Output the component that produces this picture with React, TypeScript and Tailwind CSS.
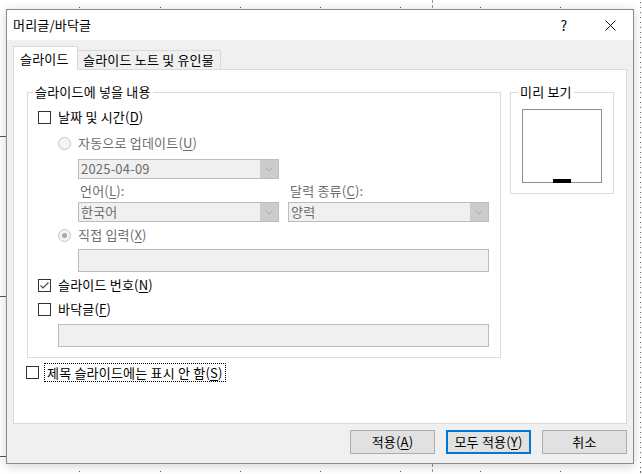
import React from "react";

// mnemonic letter, underlined like the Windows accelerator hint
const Mn = ({ k }: { k: string }) => (
  <span>
    (<u className="underline underline-offset-[2px] decoration-1">{k}</u>)
  </span>
);

function Check({ checked = false }: { checked?: boolean }) {
  return (
    <span className="relative inline-flex w-[13px] h-[13px] shrink-0 border border-[#333333] bg-white">
      {checked && (
        <svg className="absolute inset-0" width="11" height="11" viewBox="0 0 11 11">
          <path d="M1.5 5.5 L4 8 L9.5 2.5" fill="none" stroke="#444444" strokeWidth="1.1" />
        </svg>
      )}
    </span>
  );
}

function Radio({ checked = false }: { checked?: boolean }) {
  return (
    <span className="inline-flex items-center justify-center w-[13px] h-[13px] shrink-0 rounded-full border border-[#c4c4c4] bg-[#f4f4f4]">
      {checked && <span className="w-[5px] h-[5px] rounded-full bg-[#a8a8a8]" />}
    </span>
  );
}

function Combo({ value, w }: { value: string; w: string }) {
  return (
    <div className={`flex h-[20px] ${w} border border-[#bcbcbc] bg-[#f0f0f0]`}>
      <div className="flex-1 pl-[2px] flex items-center text-[#6d6d6d]">{value}</div>
      <div className="w-[18px] bg-[#cccccc] flex items-center justify-center">
        <svg width="8" height="5" viewBox="0 0 8 5">
          <path d="M0.5 0.5 L4 4 L7.5 0.5" fill="none" stroke="#a9a9a9" strokeWidth="1" />
        </svg>
      </div>
    </div>
  );
}

function Canvas() {
  const cols = [79, 160, 240, 320, 400, 480, 560, 640];
  const right = Array.from({ length: 95 }, (_, i) => i * 5 + 2);
  return (
    <svg className="absolute inset-0 pointer-events-none" width="642" height="474">
      {cols.map((x) => (
        <rect key={"t" + x} x={x} y={7} width={1} height={1} fill="#555" />
      ))}
      {cols.map((x) => (
        <rect key={"b" + x} x={x} y={471} width={1} height={1} fill="#555" />
      ))}
      {right.map((y) => (
        <rect key={"r" + y} x={640} y={y} width={1} height={1} fill="#666" />
      ))}
      <path d="M432.5 0 V10 M432.5 464 V474" stroke="#999" strokeDasharray="3 2" />
      <rect x={0} y={136} width={6} height={1} fill="#555" />
      <rect x={0} y={296} width={6} height={1} fill="#555" />
      <rect x={0} y={456} width={6} height={1} fill="#555" />
    </svg>
  );
}

export default function App() {
  return (
    <div className="relative w-[642px] h-[474px] bg-white overflow-hidden pl-[6px] pt-[9px] font-['Noto_Sans_CJK_KR','Noto_Sans',sans-serif] text-[13px] tracking-[0.2px] leading-[16px] text-black">
      <Canvas />

      {/* dialog window */}
      <div className="relative z-10 w-[628px] h-[455px] flex flex-col border border-[#8a8a8a] bg-[#f0f0f0] shadow-[0_2px_10px_rgba(0,0,0,0.18)]">
        {/* title bar */}
        <div className="h-[30px] flex items-center bg-white">
          <div className="pl-[6px]">머리글/바닥글</div>
          <div className="ml-auto flex h-full">
            <div className="w-[46px] flex items-center justify-center text-[14px]">?</div>
            <div className="w-[46px] flex items-center justify-center">
              <svg width="11" height="11" viewBox="0 0 11 11">
                <path d="M0.5 0.5 L10.5 10.5 M10.5 0.5 L0.5 10.5" stroke="#111" strokeWidth="1" />
              </svg>
            </div>
          </div>
        </div>

        {/* body */}
        <div className="flex-1 flex flex-col px-[6px] pt-[6px]">
          {/* tabs */}
          <div className="flex items-end h-[23px]">
            <div className="relative z-10 -mb-px h-[24px] w-[65px] pl-[6px] flex items-center bg-white border border-b-0 border-[#d9d9d9]">
              슬라이드
            </div>
            <div className="h-[19px] w-[143px] pl-[5px] flex items-center bg-[#f0f0f0] border border-l-0 border-b-0 border-[#d9d9d9]">
              슬라이드 노트 및 유인물
            </div>
          </div>

          {/* tab panel */}
          <div className="h-[355px] bg-white border border-[#d9d9d9] pl-[13px] pt-[22px]">
            <div className="flex items-start gap-[9px]">
              {/* group: 슬라이드에 넣을 내용 */}
              <div className="relative w-[474px] h-[266px] border border-[#dcdcdc] pl-[10px] pt-[16px]">
                <div className="absolute -top-[9px] left-[5px] px-[2px] bg-white">슬라이드에 넣을 내용</div>

                <div className="h-[16px] flex items-center gap-[7px]">
                  <Check />
                  <span>
                    날짜 및 시간<Mn k="D" />
                  </span>
                </div>

                <div className="mt-[10px] pl-[20px] h-[16px] flex items-center gap-[7px] text-[#6d6d6d]">
                  <Radio />
                  <span>
                    자동으로 업데이트<Mn k="U" />
                  </span>
                </div>

                <div className="mt-[8px] pl-[40px]">
                  <Combo value="2025-04-09" w="w-[201px]" />
                </div>

                <div className="mt-[4px] pl-[40px] flex gap-[9px] text-[#6d6d6d]">
                  <div className="w-[201px] pl-[2px]">
                    언어<Mn k="L" />:
                  </div>
                  <div className="pl-[2px]">
                    달력 종류<Mn k="C" />:
                  </div>
                </div>

                <div className="mt-[3px] pl-[40px] flex gap-[9px]">
                  <Combo value="한국어" w="w-[201px]" />
                  <Combo value="양력" w="w-[201px]" />
                </div>

                <div className="mt-[5px] pl-[20px] h-[16px] flex items-center gap-[7px] text-[#6d6d6d]">
                  <Radio checked />
                  <span>
                    직접 입력<Mn k="X" />
                  </span>
                </div>

                <div className="mt-[6px] pl-[40px]">
                  <div className="w-[411px] h-[23px] border border-[#bcbcbc] bg-[#f0f0f0]" />
                </div>

                <div className="mt-[5px] h-[16px] flex items-center gap-[7px]">
                  <Check checked />
                  <span>
                    슬라이드 번호<Mn k="N" />
                  </span>
                </div>

                <div className="mt-[8px] h-[16px] flex items-center gap-[7px]">
                  <Check />
                  <span>
                    바닥글<Mn k="F" />
                  </span>
                </div>

                <div className="mt-[7px] pl-[20px]">
                  <div className="w-[431px] h-[23px] border border-[#bcbcbc] bg-[#f0f0f0]" />
                </div>
              </div>

              {/* group: 미리 보기 */}
              <div className="relative w-[104px] h-[102px] border border-[#dcdcdc] pl-[11px] pt-[16px]">
                <div className="absolute -top-[9px] left-[7px] px-[2px] bg-white">미리 보기</div>
                <div className="w-[80px] h-[74px] border border-[#8e8e94] bg-white flex items-end justify-center">
                  <div className="w-[18px] h-[4px] -mb-px bg-black" />
                </div>
              </div>
            </div>

            <div className="mt-[5px] -ml-px h-[19px] flex items-center">
              <Check />
              <span className="ml-[5px] h-[19px] px-[2px] flex items-center border border-dotted border-black">
                제목 슬라이드에는 표시 안 함<Mn k="S" />
              </span>
            </div>
          </div>

          {/* buttons */}
          <div className="mt-[6px] flex justify-end gap-[11px]">
            <button className="w-[85px] h-[24px] border border-[#adadad] bg-[#e1e1e1]">
              적용<Mn k="A" />
            </button>
            <button className="w-[85px] h-[24px] border-2 border-[#0078d7] bg-[#e1e1e1]">
              모두 적용<Mn k="Y" />
            </button>
            <button className="w-[85px] h-[24px] border border-[#adadad] bg-[#e1e1e1]">취소</button>
          </div>
        </div>
      </div>
    </div>
  );
}
